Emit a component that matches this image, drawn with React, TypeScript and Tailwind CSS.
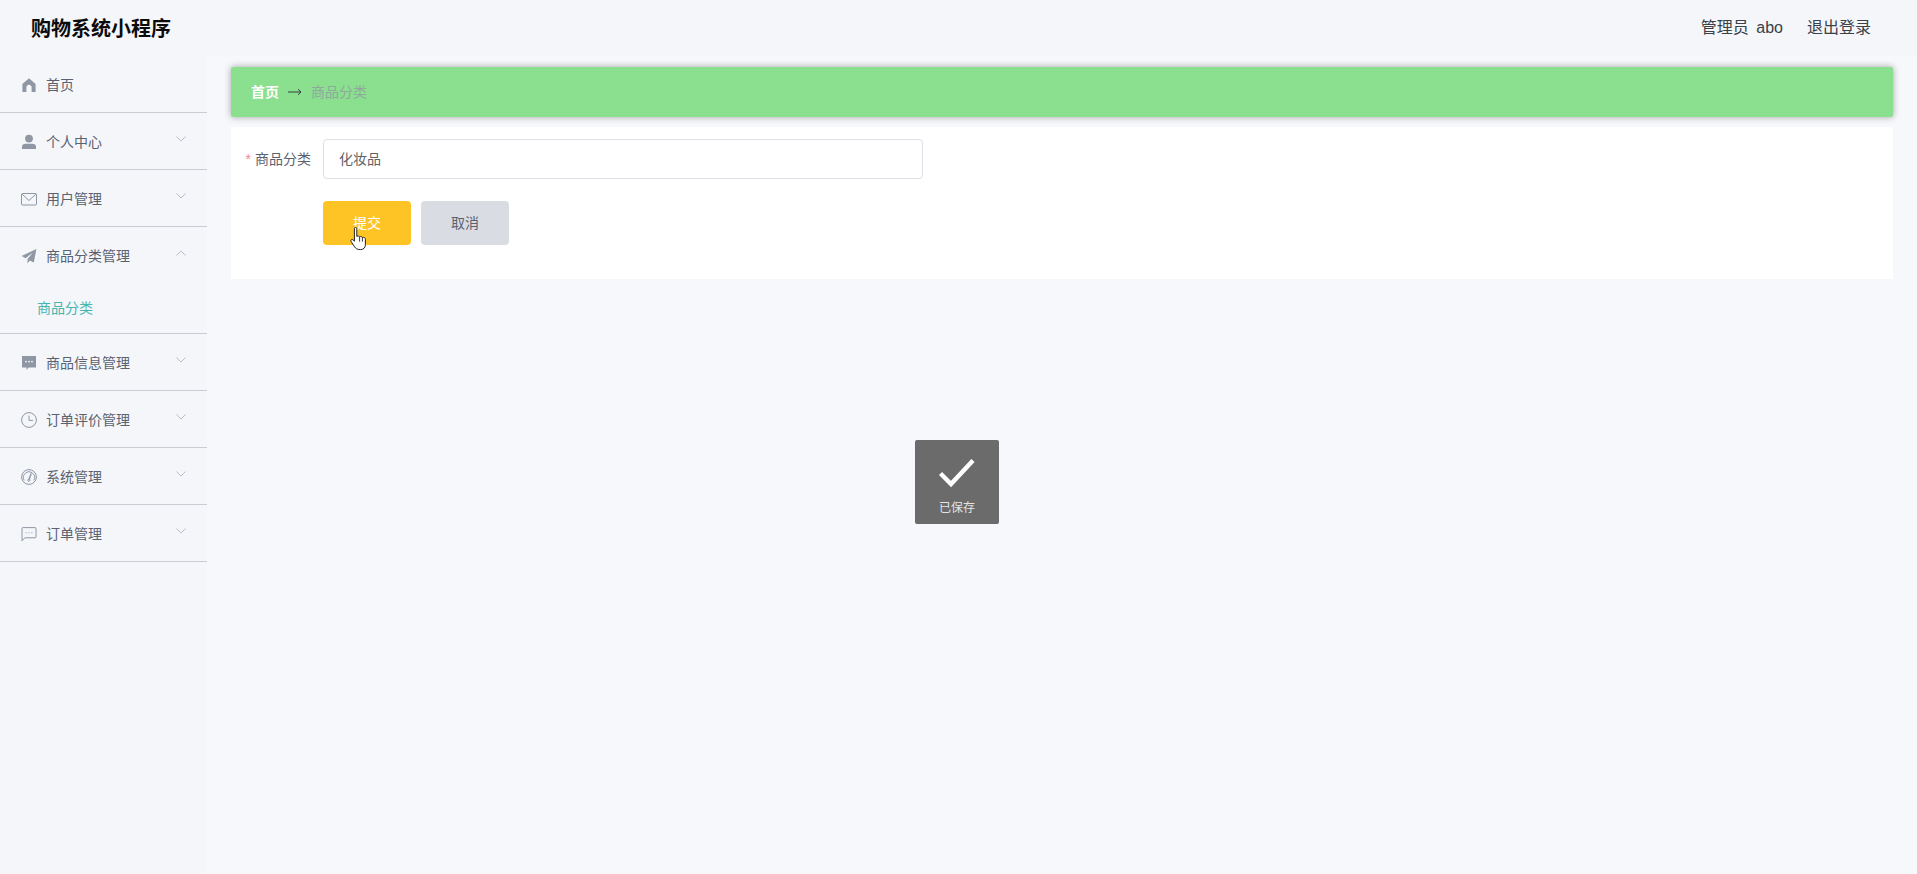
import React from 'react';

const font = { fontFamily: '"Liberation Sans", "Noto Sans CJK SC", sans-serif' };

const HomeIcon = () => (
  <svg width="16" height="16" viewBox="0 0 16 16" fill="#8f97a4">
    <path d="M8 1.2 14.6 7V15H10.6V10.2C10.6 8.8 9.4 7.8 8 7.8 6.6 7.8 5.4 8.8 5.4 10.2V15H1.4V7Z" />
  </svg>
);
const UserIcon = () => (
  <svg width="16" height="16" viewBox="0 0 16 16" fill="#8f97a4">
    <circle cx="8" cy="4.6" r="3.9" />
    <path d="M1 15V12.6C1 10.8 2.6 9.8 4.6 9.8H11.4C13.4 9.8 15 10.8 15 12.6V15Z" />
  </svg>
);
const MailIcon = () => (
  <svg width="16" height="16" viewBox="0 0 16 16" fill="none" stroke="#8f97a4" strokeWidth="1">
    <rect x="0.5" y="2.5" width="15" height="11.5" rx="1" />
    <path d="M1 3 8 9.5 15 3" />
  </svg>
);
const SendIcon = () => (
  <svg width="16" height="16" viewBox="0 0 16 16" fill="#8f97a4">
    <path d="M15.4 1 0.6 8 4.6 10.2 12 4.4 6.6 11 6.4 15.4 8.8 12.6 12.8 14.6Z" />
  </svg>
);
const ChatFillIcon = () => (
  <svg width="16" height="16" viewBox="0 0 16 16">
    <path d="M1 1H15V12.4H7.6L5.6 15V12.4H1Z" fill="#8f97a4" />
    <circle cx="5" cy="6.6" r="0.9" fill="#f4f6fa" />
    <circle cx="8" cy="6.6" r="0.9" fill="#f4f6fa" />
    <circle cx="11" cy="6.6" r="0.9" fill="#f4f6fa" />
  </svg>
);
const ClockIcon = () => (
  <svg width="16" height="16" viewBox="0 0 16 16" fill="none" stroke="#8f97a4" strokeWidth="1">
    <circle cx="8" cy="8" r="7.4" />
    <path d="M8 3.6V8.4H12" />
  </svg>
);
const GaugeIcon = () => (
  <svg width="16" height="16" viewBox="0 0 16 16" fill="none" stroke="#8f97a4" strokeWidth="1">
    <circle cx="8" cy="8" r="7.4" />
    <path d="M3.2 11.4A5.6 5.6 0 1 1 12.8 11.4" />
    <path d="M10.2 4.4 8 10.6" strokeWidth="1.4" />
    <circle cx="7.8" cy="11.2" r="1.1" />
  </svg>
);
const ChatIcon = () => (
  <svg width="16" height="16" viewBox="0 0 16 16" fill="none" stroke="#8f97a4" strokeWidth="1">
    <path d="M1 14.8V2.6A1 1 0 0 1 2 1.6H14A1 1 0 0 1 15 2.6V10.8A1 1 0 0 1 14 11.8H3.8L1 14.8Z" />
    <path d="M4.6 6.8H5.6M7.5 6.8H8.5M10.4 6.8H11.4" />
  </svg>
);
const Chevron = ({ up }: { up?: boolean }) => (
  <svg width="10" height="6" viewBox="0 0 10 6" fill="none" stroke="#a9afb9" strokeWidth="0.8" className="mb-[4px]">
    <path d={up ? 'M0.5 5.5 5 1 9.5 5.5' : 'M0.5 0.5 5 5 9.5 0.5'} />
  </svg>
);

const MENU = [
  { label: '首页', Icon: HomeIcon, arrow: false },
  { label: '个人中心', Icon: UserIcon, arrow: true },
  { label: '用户管理', Icon: MailIcon, arrow: true },
  { label: '商品分类管理', Icon: SendIcon, arrow: true, open: true, sub: '商品分类' },
  { label: '商品信息管理', Icon: ChatFillIcon, arrow: true },
  { label: '订单评价管理', Icon: ClockIcon, arrow: true },
  { label: '系统管理', Icon: GaugeIcon, arrow: true },
  { label: '订单管理', Icon: ChatIcon, arrow: true },
];

const Sidebar = () => (
  <aside className="w-[207px] shrink-0">
    {MENU.map((item) => (
      <div key={item.label} className="border-b border-[#c9ccd2]">
        <div className="flex h-[56px] items-center pl-[21px] pr-[21px] text-[14px] text-[#5a6270]">
          <span className="mr-[9px] flex w-[16px] justify-center pt-[2px]">
            <item.Icon />
          </span>
          <span className="flex-1 pt-[2px] leading-none">{item.label}</span>
          {item.arrow && <Chevron up={item.open} />}
        </div>
        {item.sub && (
          <div className="flex h-[50px] items-start pl-[37px] pt-[15px] text-[14px] leading-[20px] text-[#45b5ae]">{item.sub}</div>
        )}
      </div>
    ))}
  </aside>
);

const HandCursor = () => (
  <svg width="20" height="26" viewBox="0 0 20 26" className="absolute left-[27px] top-[25px]">
    <path
      d="M4.4 2.4C4.4 1 6.8 1 6.8 2.4V10.4C8 9.8 9.2 9.8 9.6 10.8 10.8 10.2 12 10.4 12.4 11.6 13.8 11 15.4 11.6 15.4 13.2V18.4C15.4 21.8 13.6 23.6 10.4 23.6 7.2 23.6 5.8 22.6 4.6 20.8L1 15.4C0.2 14 2 12.8 3.2 14L4.4 15.2Z"
      fill="#fff"
      stroke="#222"
      strokeWidth="1"
      strokeLinejoin="round"
    />
    <path d="M9.6 11V15.6M12.4 11.6V15.6" stroke="#222" strokeWidth="0.9" fill="none" />
  </svg>
);

export default function App() {
  return (
    <div className="relative h-[874px] overflow-hidden bg-[#f4f6fa]" style={font}>
      <header className="flex h-[56px] items-center justify-between pl-[31px] pr-[46px]">
        <h1 className="pt-[2px] text-[20px] font-bold leading-none text-[#0b0b0b]">购物系统小程序</h1>
        <div className="flex items-center gap-[24px] text-[16px] leading-none text-[#3a3f48]">
          <span className="[word-spacing:3px]">管理员 abo</span>
          <span>退出登录</span>
        </div>
      </header>

      <div className="flex h-[818px]">
        <Sidebar />
        <main className="flex-1 bg-[#f7f8fb] pl-[24px] pr-[24px] pt-[11px]">
          <div className="flex h-[50px] items-center rounded-[2px] bg-[#8ae08e] pl-[20px] text-[14px] shadow-[0_0_7px_rgba(0,0,0,0.35)]">
            <span className="font-bold text-white">首页</span>
            <svg width="14" height="8" viewBox="0 0 14 8" fill="none" stroke="#33403a" strokeWidth="1" className="ml-[9px] mr-[9px] mb-[1px]">
              <path d="M0 4H13M10 1.2 13 4 10 6.8" />
            </svg>
            <span className="text-[#8fa99d]">商品分类</span>
          </div>

          <form className="mt-[10px] h-[152px] bg-white pt-[12px]">
            <div className="flex items-center">
              <label className="w-[92px] pr-[12px] text-right text-[14px] text-[#5a6270]">
                <span className="mr-[4px] text-[#f08a8a]">*</span>商品分类
              </label>
              <div className="flex h-[40px] w-[600px] items-center rounded-[4px] border border-[#dcdfe6] bg-white pl-[15px] text-[14px] text-[#606266]">
                化妆品
              </div>
            </div>
            <div className="ml-[92px] mt-[22px] flex gap-[10px]">
              <button type="button" className="relative h-[44px] w-[88px] rounded-[4px] bg-[#fec426] text-[14px] text-white">
                提交
                <HandCursor />
              </button>
              <button type="button" className="h-[44px] w-[88px] rounded-[4px] bg-[#d9dce3] text-[14px] text-[#5a6270]">
                取消
              </button>
            </div>
          </form>
        </main>
      </div>

      <div className="absolute left-[915px] top-[440px] flex h-[84px] w-[84px] flex-col items-center rounded-[2px] bg-[#6a6b6a]">
        <svg width="36" height="30" viewBox="0 0 36 30" className="mt-[18px]" fill="none" stroke="#fff" strokeWidth="4.4">
          <path d="M1.5 15.5 12 26 34 2.5" />
        </svg>
        <span className="mt-[14px] text-[12px] leading-none text-[#e4e4e4]">已保存</span>
      </div>
    </div>
  );
}
